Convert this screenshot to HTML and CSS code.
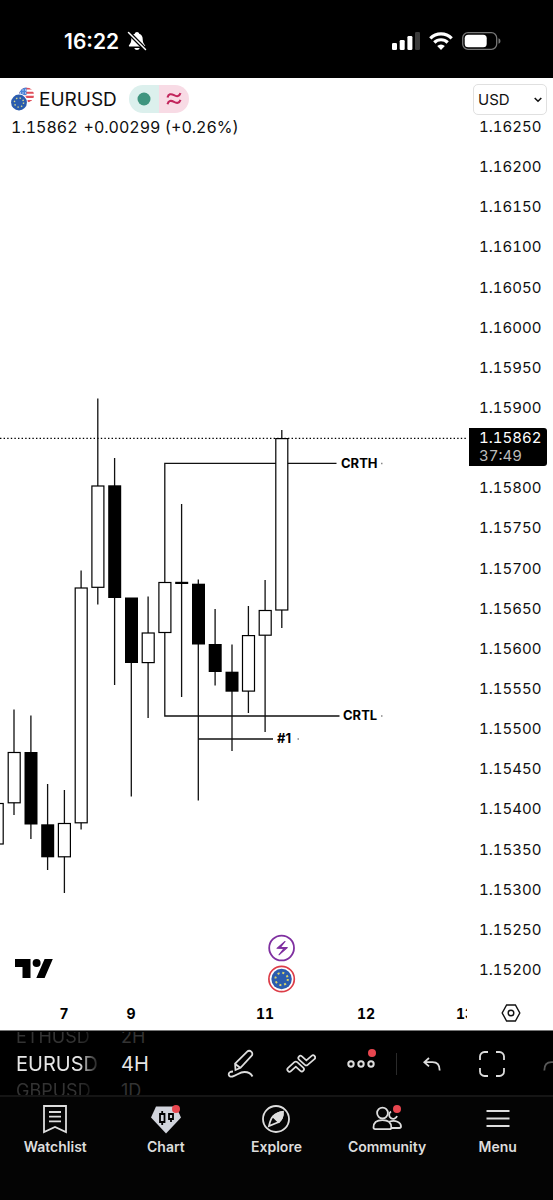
FILE: index.html
```html
<!DOCTYPE html>
<html lang="en">
<head>
    <meta charset="UTF-8">
    <meta name="viewport" content="width=device-width, initial-scale=1.0">
    <title>EURUSD chart</title>
    <link rel="stylesheet" href="styles.css">
</head>
<body>
    <div class="status">
        <div class="clock">
            <span>16:22</span>
            <svg width="20" height="20" viewBox="0 0 20 20">
                <path d="M10 1c1.200 0 2 .8 2.200 1.800 2.300.8 3.500 2.800 3.500 5.200 0 3.800 1.300 4.800 2.300 6.200.4.700 0 1.300-.8 1.300H2.800c-.8 0-1.200-.6-.8-1.300C3 12.800 4.300 11.800 4.300 8c0-2.400 1.200-4.400 3.500-5.200C8 1.800 8.800 1 10 1z" fill="#fff"/>
                <path d="M7.300 17h5.400c-.3 1.300-1.400 2-2.700 2s-2.400-.7-2.700-2z" fill="#fff"/>
                <path d="M2 2l17 17" stroke="#000" stroke-width="4"/>
                <path d="M1.500 1.500L18.500 18.500" stroke="#fff" stroke-width="1.500" stroke-linecap="round"/>
            </svg>
        </div>
        <div class="signals">
            <svg width="28" height="18" viewBox="0 0 28 18" fill="#fff">
                <rect x="0" y="11" width="5" height="7" rx="1.300"/>
                <rect x="7.700" y="8" width="5" height="10" rx="1.300"/>
                <rect x="15.400" y="4" width="5" height="14" rx="1.300"/>
                <rect x="23" y="0" width="5" height="18" rx="1.300" fill="#3a3a3a"/>
            </svg>
            <svg width="24" height="18" viewBox="0 0 24 18" fill="none" stroke="#fff" stroke-width="3.200">
                <path d="M1.300 6.300a15.200 15.200 0 0 1 21.400 0"/>
                <path d="M5.300 10.500a9.500 9.500 0 0 1 13.400 0"/>
                <path d="M12 18l-3.800-3.900a5.400 5.400 0 0 1 7.600 0z" fill="#fff" stroke="none"/>
            </svg>
            <svg width="39" height="18" viewBox="0 0 39 18">
                <rect x=".7" y=".7" width="34" height="16.600" rx="5.300" fill="none" stroke="#777" stroke-width="1.300"/>
                <rect x="2.700" y="2.700" width="22" height="12.600" rx="3.500" fill="#fff"/>
                <path d="M36.500 6.200c2.600.8 2.600 4.800 0 5.600z" fill="#777"/>
            </svg>
        </div>
    </div>

    <main class="chart">
        <div class="pane">
            <header class="legend">
                <div class="symbol">
                    <svg width="24" height="24" viewBox="0 0 24 24">
                        <clipPath id="us"><circle cx="15.500" cy="8" r="7.600"/></clipPath>
                        <g clip-path="url(#us)">
                            <rect x="7" width="17" height="16" fill="#fff"/>
                            <path d="M7 1.500h17M7 5.700h17M7 9.900h17M7 14.100h17" stroke="#e0505c" stroke-width="2.100"/>
                            <rect x="7" width="8.500" height="8" fill="#4a83d8"/>
                            <path d="M9 3h6M9 6h6" stroke="#fff" stroke-width="1" stroke-dasharray="1 1.500"/>
                        </g>
                        <circle cx="8" cy="15.500" r="9" fill="#fff"/>
                        <circle cx="8" cy="15.500" r="7.900" fill="#2b5cae"/>
                        <circle cx="8" cy="15.500" r="4.600" fill="none" stroke="#d9d98a" stroke-width="1.400" stroke-dasharray="1.400 2.213"/>
                    </svg>
                    <h1>EURUSD</h1>
                    <div class="pill">
                        <span class="pill-open"><svg width="14" height="14" viewBox="0 0 14 14"><circle cx="7" cy="7" r="6.500" fill="#3f957f"/></svg></span>
                        <span class="pill-approx"><svg width="16" height="14" viewBox="0 0 16 14" fill="none" stroke="#c2255c" stroke-width="2.100"><path d="M1.500 5.500C2.500 1.800 5 1.500 8 3.200s5.300 1.300 6.500-2M1.500 12.200C2.500 8.500 5 8.200 8 9.900s5.300 1.300 6.500-2"/></svg></span>
                    </div>
                </div>
                <p class="quote"><span>1.15862</span><span>+0.00299 (+0.26%)</span></p>
            </header>

            <svg class="plot" viewBox="0 140 467 890" preserveAspectRatio="xMinYMin meet">
                <line class="last-price" x1="0" y1="438.300" x2="466" y2="438.300"/>

                <!-- range levels -->
                <g class="level">
                    <path d="M336.500 463.300H164.800V716H339.500"/>
                    <path d="M198.300 739H273"/>
                    <path d="M381 463.500h1.500M381 716h1.500M297.500 739h1.500" class="level-end"/>
                </g>

                <!-- candles -->
                <g class="wick">
                    <path d="M14 709.500V815M30.900 715.500V839M47.600 784V870M64.400 790V893M81.100 570.500V829.500M97.800 398.500V604.500M114.600 458V685"/>
                    <path d="M131.300 598V796.500M148.100 596.500V718M181.600 504V697M198.300 579.500V800.500M215.100 609V685.500M232 644.500V751"/>
                    <path d="M248.400 606V713M265.100 580V732M281.800 430V628"/>
                </g>
                <g class="up">
                    <rect x="-9" y="803.500" width="12.200" height="40.500"/>
                    <rect x="8.200" y="752.500" width="12" height="50.300"/>
                    <rect x="58.400" y="823.500" width="12" height="33.300"/>
                    <rect x="75.200" y="588" width="12" height="234.800"/>
                    <rect x="91.900" y="486" width="12" height="101.300"/>
                    <rect x="142.200" y="633" width="12" height="29.600"/>
                    <rect x="158.900" y="582.500" width="12" height="50"/>
                    <rect x="242.500" y="635.600" width="12" height="55.500"/>
                    <rect x="259.200" y="610.500" width="12" height="24.700"/>
                    <rect x="275.800" y="438.600" width="12" height="171.400"/>
                </g>
                <g class="down">
                    <rect x="24.500" y="752" width="13" height="72.500"/>
                    <rect x="41.200" y="824.300" width="13" height="33"/>
                    <rect x="108.200" y="485.300" width="13" height="112.700"/>
                    <rect x="125" y="597.500" width="13" height="65.500"/>
                    <rect x="175.200" y="581.800" width="13" height="2.200"/>
                    <rect x="192" y="583.700" width="13" height="60.800"/>
                    <rect x="208.700" y="644" width="13" height="28"/>
                    <rect x="225.500" y="671.700" width="13" height="20"/>
                </g>

                <text class="note" x="341" y="468">CRTH</text>
                <text class="note" x="343" y="720">CRTL</text>
                <text class="note" x="277" y="743">#1</text>

                <!-- events -->
                <circle cx="281.600" cy="948" r="12.400" fill="#fff" stroke="#7f2fa0" stroke-width="1.800"/>
                <path d="M285 941.500l-8 6.800 7 .200-5 6.300 8.300-7.200-7-.200z" fill="#7f2fa0" stroke="#7f2fa0" stroke-width="1.100" stroke-linejoin="round"/>
                <circle cx="281.600" cy="979" r="12.700" fill="#fff" stroke="#dc3c47" stroke-width="1.700"/>
                <circle cx="281.600" cy="979" r="10.200" fill="#2b5cae"/>
                <circle cx="281.600" cy="979" r="6.200" fill="none" stroke="#d9d36a" stroke-width="2" stroke-dasharray="2 2.869"/>

                <!-- logo -->
                <path d="M15 959h15.500v19h-8v-11H15zM44.600 959h8.200l-8.200 19h-8.300z"/>
                <circle cx="36.600" cy="963" r="4"/>

                <g class="time">
                    <text x="64" y="1019">7</text>
                    <text x="131" y="1019">9</text>
                    <text x="265" y="1019">11</text>
                    <text x="366" y="1019">12</text>
                    <text x="465" y="1019">13</text>
                </g>
            </svg>
        </div>

        <aside class="axis">
            <div class="currency">
                <select aria-label="Currency">
                    <option>USD</option>
                </select>
                <svg width="8" height="6" viewBox="0 0 8 6" fill="none" stroke="#111" stroke-width="1.600"><path d="M.7 1l3.300 3.200L7.300 1"/></svg>
            </div>
            <ul class="prices">
                <li>1.16250</li>
                <li>1.16200</li>
                <li>1.16150</li>
                <li>1.16100</li>
                <li>1.16050</li>
                <li>1.16000</li>
                <li>1.15950</li>
                <li>1.15900</li>
                <li class="current"><div class="tag">1.15862<span>37:49</span></div></li>
                <li>1.15800</li>
                <li>1.15750</li>
                <li>1.15700</li>
                <li>1.15650</li>
                <li>1.15600</li>
                <li>1.15550</li>
                <li>1.15500</li>
                <li>1.15450</li>
                <li>1.15400</li>
                <li>1.15350</li>
                <li>1.15300</li>
                <li>1.15250</li>
                <li>1.15200</li>
            </ul>
            <button class="settings" aria-label="Chart settings">
                <svg width="20" height="18" viewBox="0 0 20 18" fill="none" stroke="#111" stroke-width="1.400"><path d="M5.600 1h8.800L18.800 9l-4.400 8H5.600L1.200 9z"/><circle cx="10" cy="9" r="2.800"/></svg>
            </button>
        </aside>
    </main>

    <div class="toolbar">
        <div class="wheel wheel-symbol"><span>ETHUSD</span><strong>EURUSD</strong><span>GBPUSD</span></div>
        <div class="wheel wheel-interval"><span>2H</span><strong>4H</strong><span>1D</span></div>
        <button class="tool" aria-label="Draw">
            <svg width="28" height="30" viewBox="0 0 28 30"><path d="M8.500 21l-.4-6.500L20.200 2.600a2.800 2.800 0 0 1 4 0l.3.300a2.800 2.800 0 0 1 0 4L13.500 18.800zM8.300 15l5.200 4M6 22.500c-3 0-4.500 1.300-4.300 3.200.2 1.600 1.800 2.200 3.800 1.800 4.500-1 7-4.500 12-4.500 4 0 6.500 1.500 8 4.500"/></svg>
        </button>
        <button class="tool" aria-label="Indicators">
            <svg width="30" height="20" viewBox="0 0 30 20" stroke-linecap="round" stroke-linejoin="round">
                <path class="outer" d="M3.500 15.500l6.300-5.700 6 5.400M14.500 4l5.800 5.200 6.700-5.700"/>
                <path class="inner" d="M3.500 15.500l6.300-5.700 6 5.400M14.500 4l5.800 5.200 6.700-5.700"/>
            </svg>
        </button>
        <button class="tool" aria-label="More">
            <svg width="28" height="10" viewBox="0 0 28 10" class="bold"><circle cx="4" cy="5" r="2.700"/><circle cx="14" cy="5" r="2.700"/><circle cx="24" cy="5" r="2.700"/></svg>
            <i class="dot"></i>
        </button>
        <div class="divider"></div>
        <button class="tool" aria-label="Undo">
            <svg width="18" height="14" viewBox="0 0 18 14"><path d="M6 1L1.300 5.200 6 9.400M1.300 5.200h8.200c4.700 0 7.200 3.300 7.200 8.300"/></svg>
        </button>
        <button class="tool" aria-label="Fullscreen">
            <svg width="26" height="26" viewBox="0 0 26 26"><path d="M1 9V5.500A4.500 4.500 0 0 1 5.500 1H9M17 1h3.500A4.500 4.500 0 0 1 25 5.500V9M25 17v3.500a4.500 4.500 0 0 1-4.500 4.500H17M9 25H5.500A4.500 4.500 0 0 1 1 20.500V17"/></svg>
        </button>
        <button class="tool faded" aria-label="Redo">
            <svg width="18" height="14" viewBox="0 0 18 14"><path d="M12 1l4.700 4.200L12 9.400M16.700 5.200H8.500C3.800 5.200 1.300 8.500 1.300 13.500"/></svg>
        </button>
    </div>

    <nav class="tabs">
        <a href="#watchlist">
            <svg width="32" height="30" viewBox="0 0 32 30"><path d="M5 2h22v26l-11-5-11 5zM10 8h12M10 12.700h12M10 17.400h12"/></svg>
            Watchlist
        </a>
        <a href="#chart">
            <svg width="32" height="30" viewBox="0 0 32 30"><path d="M6 2.500h20l5 11L16 29.500 1 13.500z" fill="#d1d4dc" stroke="none"/><path d="M10 10h4.500v8H10zM12.200 7v3M12.200 18v3M19 10v5h4v-5zM21 15v3" stroke="#000"/></svg>
            <i class="dot"></i>
            Chart
        </a>
        <a href="#explore">
            <svg width="32" height="30" viewBox="0 0 32 30"><circle cx="16" cy="15" r="13"/><path d="M22.800 7.800c.3 4-1 7.600-4 10.200L9 22c.8-4 1.800-7.500 4.200-9.800 2.600-2.500 6-4 9.600-4.400zM13.500 13l4.500 4.300"/><path d="M22.800 7.800c.3 4-1 7.600-4 10.200l-5.300-5.600c2.600-2.500 5.700-4.200 9.300-4.600z" fill="#ddd"/></svg>
            Explore
        </a>
        <a href="#community">
            <svg width="32" height="30" viewBox="0 0 32 30"><circle cx="11.500" cy="9" r="5.400"/><path d="M20 7.500a4 4 0 1 0 6 4.500M2.500 23.500c0-5 3.700-7.300 8.900-7.300s8.900 2.300 8.900 7.300c0 1-.5 1.700-1.700 1.700H4.200c-1.200 0-1.700-.7-1.700-1.700zM18.500 17.500c6-1.700 11.500.7 11.500 4.800 0 1-.5 1.700-1.700 1.700h-8"/></svg>
            <i class="dot"></i>
            Community
        </a>
        <a href="#menu">
            <svg width="32" height="30" viewBox="0 0 32 30"><path d="M4.500 7h23M4.500 14.500h23M4.500 22h23"/></svg>
            Menu
        </a>
    </nav>
</body>
</html>
```

FILE: styles.css
```css
*{
    box-sizing: border-box;
}

body{
    margin: 0;
    min-height: 100vh;
    display: flex;
    flex-direction: column;
    background: #040404;
    color: #0f0f0f;
    font-family: Inter, Roboto, sans-serif;
    overflow-x: hidden;
}

svg{
    display: block;
}

button{
    padding: 0;
    border: none;
    background: none;
    cursor: pointer;
}

/* status bar */
.status{
    display: flex;
    justify-content: space-between;
    align-items: center;
    height: 78px;
    padding: 4px 52px 0 64px;
    background: #000;
    color: #fff;
}

.clock{
    display: flex;
    align-items: center;
    gap: 8px;
    font-size: 21px;
    font-weight: 600;
}

.signals{
    display: flex;
    align-items: center;
    gap: 9px;
}

/* chart */
.chart{
    display: flex;
    background: #fff;
    border-bottom: 1px solid #777;
}

.pane{
    flex: 1;
    min-width: 0;
}

.legend{
    height: 62px;
    padding: 7px 0 0 11px;
}

.symbol{
    display: flex;
    align-items: center;
    height: 28px;
}

.symbol h1{
    margin: 0 12px 0 4px;
    font-size: 19px;
    font-weight: 400;
}

.pill{
    display: flex;
    width: 60px;
    height: 28px;
    border-radius: 14px;
    overflow: hidden;
}

.pill span{
    flex: 1;
    display: flex;
    align-items: center;
    justify-content: center;
}

.pill-open{
    background: #dcf0ed;
}

.pill-approx{
    background: #f8dbe5;
}

.quote{
    display: flex;
    gap: 6px;
    margin: 4px 0 0;
    font-size: 16px;
    line-height: 20px;
    font-variant-numeric: tabular-nums;
}

.plot{
    width: 100%;
    height: 890px;
}

.last-price{
    stroke: #000;
    stroke-width: 1.3;
    stroke-dasharray: 1.4 2.2;
}

.level,
.wick{
    fill: none;
    stroke: #111;
    stroke-width: 1.3;
}

.level-end{
    stroke: #888;
}

.up{
    fill: #fff;
    stroke: #000;
    stroke-width: 1.2;
}

.down{
    fill: #000;
}

.note{
    font-size: 13px;
    font-weight: 700;
}

.time{
    font-size: 14px;
    font-weight: 700;
    font-variant-numeric: tabular-nums;
    text-anchor: middle;
}

/* price axis */
.axis{
    display: flex;
    flex-direction: column;
    width: 86px;
    padding-top: 6px;
}

.currency{
    position: relative;
    margin: 0 6px;
}

.currency select{
    appearance: none;
    display: block;
    width: 100%;
    height: 31px;
    padding: 0 4px;
    border: 1px solid #e0e0e0;
    border-radius: 5px;
    background: #fff;
    color: #111;
    font-family: inherit;
    font-size: 15px;
}

.currency svg{
    position: absolute;
    right: 5px;
    top: 13px;
    pointer-events: none;
}

.prices{
    display: flex;
    flex-direction: column;
    justify-content: space-between;
    height: 863px;
    margin: 2px 0 0;
    padding: 0;
    list-style: none;
    font-size: 15px;
    line-height: 20px;
    font-variant-numeric: tabular-nums;
}

.prices li{
    padding-left: 12px;
}

.prices .current{
    position: relative;
    height: 20px;
}

.tag{
    position: absolute;
    top: -10px;
    left: 2px;
    width: 78px;
    height: 38px;
    padding: 1px 10px;
    border-radius: 0 3px 3px 0;
    background: #000;
    color: #fff;
    line-height: 18px;
}

.tag span{
    display: block;
    color: #bbb;
}

.settings{
    flex: 1;
    display: flex;
    align-items: center;
    justify-content: center;
    padding: 16px 0 0 2px;
}

/* toolbar */
.toolbar{
    display: flex;
    align-items: center;
    height: 66px;
    padding: 1px 0 0 16px;
    overflow: hidden;
    background: #000;
    border-bottom: 2px solid #151515;
}

.wheel{
    flex: none;
    display: flex;
    flex-direction: column;
    justify-content: center;
    height: 64px;
    overflow: hidden;
    color: #333;
    font-size: 18px;
    line-height: 26px;
}

.wheel strong{
    color: #e6e6e6;
    font-size: 20px;
    font-weight: 400;
    line-height: 28px;
}

.wheel-symbol{
    width: 84px;
    margin-right: 21px;
    -webkit-mask-image: linear-gradient(to right, #000 75%, transparent);
    mask-image: linear-gradient(to right, #000 75%, transparent);
}

.wheel-interval{
    width: 90px;
}

.tool{
    position: relative;
    flex: none;
    display: flex;
    align-items: center;
    justify-content: center;
    width: 60px;
    height: 44px;
}

.tool svg,
.tabs svg{
    fill: none;
    stroke: #ddd;
    stroke-width: 1.8;
}

.tool .bold{
    stroke-width: 2;
}

.outer{
    stroke-width: 6;
}

.inner{
    stroke: #000;
    stroke-width: 2.6;
}

.tool .dot{
    top: 7px;
    right: 15px;
}

.faded{
    opacity: 0.4;
}

.divider{
    flex: none;
    width: 1px;
    height: 22px;
    margin: 0 5px;
    background: #2a2a2a;
}

.dot{
    position: absolute;
    width: 8px;
    height: 8px;
    border-radius: 50%;
    background: #e8464f;
}

/* bottom tabs */
.tabs{
    flex: 1;
    display: flex;
    align-items: flex-start;
}

.tabs a{
    position: relative;
    flex: 1 0 0;
    display: flex;
    flex-direction: column;
    align-items: center;
    gap: 5px;
    padding-top: 7px;
    color: #ddd;
    font-size: 14px;
    font-weight: 600;
    line-height: 16px;
    text-decoration: none;
}

.tabs .dot{
    top: 8px;
    left: 50%;
    margin-left: 6px;
}
```
